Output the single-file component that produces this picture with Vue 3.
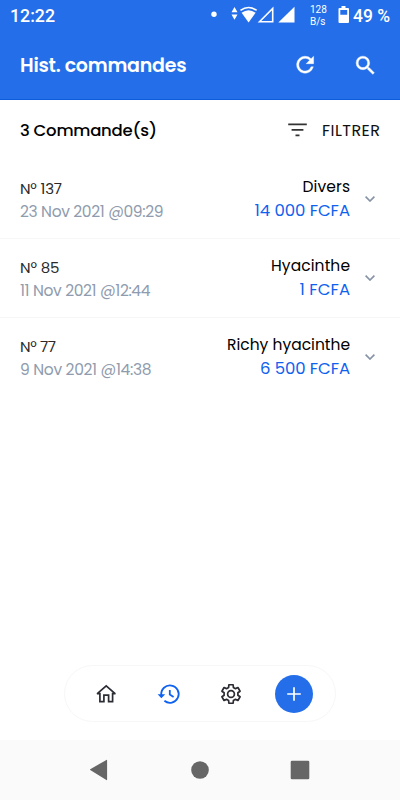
<script setup>
const orders = [
  { id: 137, date: '23 Nov 2021 @09:29', client: 'Divers', amount: '14 000 FCFA', widths: [42, 143.5, 47.5, 95.5] },
  { id: 85, date: '11 Nov 2021 @12:44', client: 'Hyacinthe', amount: '1 FCFA', widths: [39.5, 130.5, 79, 50.5] },
  { id: 77, date: '9 Nov 2021 @14:38', client: 'Richy hyacinthe', amount: '6 500 FCFA', widths: [36, 131.5, 123, 90] },
]

// six-toothed gear outline centered on 12,12
const point = (radius, degrees) => {
  const angle = (degrees * Math.PI) / 180
  return `${(12 + radius * Math.cos(angle)).toFixed(2)},${(12 + radius * Math.sin(angle)).toFixed(2)}`
}

const gear = [30, 90, 150, 210, 270, 330]
  .flatMap((a) => [point(7, a - 20), point(9.5, a - 13), point(9.5, a + 13), point(7, a + 20)])
  .join(' ')
</script>

<template>
  <div class="screen">
    <header class="header">
      <div class="status">
        <svg class="clock" width="48" height="20"><text x="0" y="15" textLength="45" lengthAdjust="spacingAndGlyphs">12:22</text></svg>
        <svg class="signals" width="92" height="32" viewBox="208 0 92 32" fill="#fff">
          <circle cx="214" cy="14.3" r="2.7" />
          <path d="M231.5 12.2l3-5.2 3 5.2zM231.5 14.5h6l-3 5.2z" />
          <path d="M241.6 12.8Q248.5 7.8 255.6 12.8L248.6 22.6z" />
          <path d="M240.5 10.4Q248.5 4.6 256.6 10.4" fill="none" stroke="#fff" stroke-width="1.7" />
          <path d="M259.5 21.8L272.7 8.5v13.3z" fill="none" stroke="#fff" stroke-width="1.6" />
          <path d="M278.3 22.5L294.5 6.8v15.7z" />
        </svg>
        <div class="speed"><span>128</span><span>B/s</span></div>
        <svg class="battery" width="12" height="18" viewBox="0 0 12 18">
          <path d="M3.5 0h4v2H10q1 0 1 1v13q0 1-1 1H1.5q-1 0-1-1V3q0-1 1-1h2zM2.3 4v4.7h6.9V4z" fill="#fff" fill-rule="evenodd" />
        </svg>
        <svg class="percent" width="40" height="20"><text x="0" y="15" textLength="37" lengthAdjust="spacingAndGlyphs">49 %</text></svg>
      </div>
      <div class="toolbar">
        <svg class="title" width="180" height="30"><text x="0" y="21.6" textLength="166.5">Hist. commandes</text></svg>
        <svg class="refresh" width="24" height="24" viewBox="0 0 24 24" fill="#fff">
          <path d="M17.65 6.35A7.95 7.95 0 0 0 12 4a8 8 0 1 0 7.73 10h-2.08A6 6 0 1 1 12 6c1.66 0 3.14.69 4.22 1.78L13 11h7V4z" transform="translate(-.6 -1) scale(1.06)" stroke="#fff" stroke-width=".4" />
        </svg>
        <svg class="search" width="25" height="25" viewBox="0 0 24 24" fill="#fff" stroke="#fff" stroke-width=".4">
          <path d="M15.5 14h-.79l-.28-.27A6.47 6.47 0 0 0 16 9.5 6.5 6.5 0 1 0 9.5 16c1.61 0 3.09-.59 4.23-1.57l.27.28v.79l5 4.99L20.49 19zM9.5 14A4.5 4.5 0 1 1 14 9.5 4.5 4.5 0 0 1 9.5 14z" />
        </svg>
      </div>
    </header>

    <div class="summary">
      <svg class="count" width="150" height="26"><text x="0" y="19" textLength="137">3 Commande(s)</text></svg>
      <svg class="filter-icon" width="20" height="14" viewBox="0 0 20 14" stroke="#333" stroke-width="1.9">
        <path d="M.2 1.4h18.6M3.6 6.9h11.8M7.5 12.4h4" />
      </svg>
      <svg class="filter" width="62" height="26"><text x="0" y="19" textLength="58">FILTRER</text></svg>
    </div>

    <main class="orders">
      <div v-for="order in orders" :key="order.id" class="order">
        <svg class="details" width="160" height="50">
          <text class="number" x="0" y="20" :textLength="order.widths[0]">Nº {{ order.id }}</text>
          <text class="date" x="0" y="43" :textLength="order.widths[1]">{{ order.date }}</text>
        </svg>
        <svg class="payment" width="140" height="50">
          <text class="client" :x="140 - order.widths[2]" y="18" :textLength="order.widths[2]">{{ order.client }}</text>
          <text class="amount" :x="140 - order.widths[3]" y="42" :textLength="order.widths[3]">{{ order.amount }}</text>
        </svg>
        <svg class="chevron" width="10" height="6" viewBox="0 0 10 6" fill="none" stroke="#8794a7" stroke-width="1.7">
          <path d="M.6.7L5 5 9.4.7" />
        </svg>
      </div>
    </main>

    <nav class="tabs">
      <svg width="24" height="24" viewBox="0 0 24 24" fill="none" stroke="#2b2d33" stroke-width="1.7">
        <path d="M3 11.8L12.2 3.8 21.4 11.8M2.9 11.6H5.9V19.6H9.9V13.2H14.6V19.6H18.6V11.6H21.5" />
      </svg>
      <svg width="24" height="24" viewBox="0 0 24 24" fill="none" stroke="#0f62f0" stroke-width="1.8">
        <path d="M4.3 13A8.7 8.7 0 1 1 7.4 18.8M12.8 8v4.6l3.8 2.4" />
        <path d="M.6 12.2h7.6L4.4 16.2z" fill="#0f62f0" stroke="none" />
      </svg>
      <svg width="24" height="24" viewBox="0 0 24 24" fill="none" stroke="#2b2d33" stroke-width="1.7" stroke-linejoin="round">
        <polygon :points="gear" />
        <circle cx="12" cy="12" r="3.4" />
      </svg>
      <div class="add">
        <svg width="14" height="14" viewBox="0 0 14 14" stroke="#fff" stroke-width="1.7">
          <path d="M7 .2v13.6M.2 7h13.6" />
        </svg>
      </div>
    </nav>

    <footer class="system">
      <svg width="20" height="22" viewBox="0 0 20 22" fill="#666"><path d="M.2 10.3L16.4.9q.7-.4.7.5v19.2q0 .9-.7.5L.2 10.9q-.4-.3 0-.6z" /></svg>
      <svg width="20" height="20" viewBox="0 0 20 20" fill="#666"><circle cx="10" cy="10" r="8.8" /></svg>
      <svg width="20" height="20" viewBox="0 0 20 20" fill="#666"><rect x=".7" y=".7" width="18.6" height="18.6" rx="1.3" /></svg>
    </footer>
  </div>
</template>

<style>
body {
  margin: 0;
}
</style>

<style scoped>
.screen {
  width: 400px;
  height: 800px;
  display: flex;
  flex-direction: column;
  background: #fff;
  font-family: Poppins, Inter, sans-serif;
  overflow: hidden;
}

svg {
  display: block;
  flex: none;
}

.header {
  height: 99px;
  flex: none;
  background: #246fe9;
  border-bottom: 1px solid #0d5cdd;
}

.status {
  height: 32px;
  display: flex;
  padding-left: 10px;
  font-family: Roboto, sans-serif;
  font-weight: 500;
  color: #fff;
}

.status text {
  fill: #fff;
  font-size: 17.5px;
}

.clock,
.percent {
  margin-top: 7px;
}

.signals {
  margin-left: 150px;
}

.speed {
  width: 19px;
  margin: 4px 0 0 10px;
  display: flex;
  flex-direction: column;
  font-size: 10px;
  font-weight: 400;
  line-height: 11.5px;
}

.battery {
  margin: 6px 0 0 9px;
}

.percent {
  margin-left: 3px;
}

.toolbar {
  display: flex;
  align-items: center;
  height: 66px;
  padding: 0 20px;
}

.title text {
  fill: #fff;
  font-size: 19px;
  font-weight: 600;
}

.refresh {
  margin: 0 35.5px 0 93px;
}

.summary {
  height: 60px;
  flex: none;
  display: flex;
  align-items: center;
  padding: 0 16px 0 20px;
}

.count text {
  font-size: 16.5px;
  font-weight: 500;
}

.filter-icon {
  margin: 0 14px 0 118px;
}

.filter text {
  font-size: 16px;
  fill: #111;
}

.orders {
  flex: 1;
}

.order {
  height: 78.8px;
  box-sizing: border-box;
  display: flex;
  align-items: flex-start;
  padding: 14px 25px 0 20px;
}

.order:not(:last-child) {
  border-bottom: 1.5px solid #f7f7f7;
}

.order text {
  font-size: 15.5px;
}

.order .number {
  font-size: 15px;
  fill: #2a2a2a;
}

.order .date {
  fill: #8f9cae;
}

.order .amount {
  font-size: 16.5px;
  fill: #0f62f0;
}

.payment {
  margin-left: 30px;
}

.chevron {
  margin: 22.4px 0 0 15px;
}

.tabs {
  width: 272px;
  height: 57px;
  box-sizing: border-box;
  flex: none;
  margin: 0 0 18px 64px;
  padding-left: 29px;
  display: flex;
  align-items: center;
  gap: 38.5px;
  border: 1.5px solid #f7f7f7;
  border-radius: 29px;
}

.add {
  width: 38px;
  height: 38px;
  margin-left: -6.5px;
  display: flex;
  align-items: center;
  justify-content: center;
  border-radius: 50%;
  background: #246fe9;
}

.system {
  height: 60px;
  flex: none;
  display: flex;
  align-items: center;
  justify-content: space-between;
  padding: 0 90px;
  background: #fafafa;
}
</style>
